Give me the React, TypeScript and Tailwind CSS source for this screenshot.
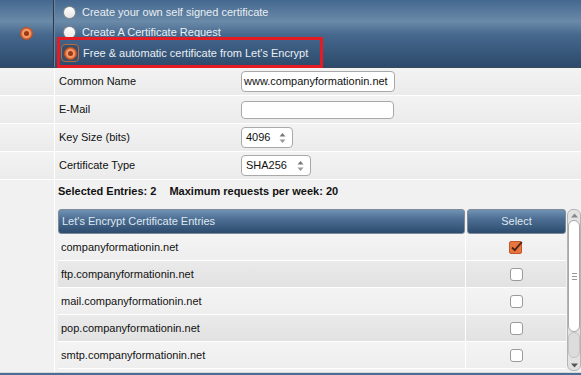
import React from 'react';

const entries = [
  { name: 'companyformationin.net', checked: true },
  { name: 'ftp.companyformationin.net', checked: false },
  { name: 'mail.companyformationin.net', checked: false },
  { name: 'pop.companyformationin.net', checked: false },
  { name: 'smtp.companyformationin.net', checked: false },
];

const OrangeRadio = () => (
  <span className="w-[13px] h-[13px] rounded-full bg-[#e36a34] border border-[#b94e22] flex items-center justify-center">
    <span className="w-[9px] h-[9px] rounded-full bg-[#f19a6c] flex items-center justify-center">
      <span className="w-[5px] h-[5px] rounded-full bg-[#9a3a14]" />
    </span>
  </span>
);

const WhiteRadio = () => (
  <span className="w-[13px] h-[13px] rounded-full bg-gradient-to-b from-white to-[#e6e6e6] border border-[#8a8a8a] shrink-0" />
);

const Spinner = ({ value, width }: { value: string; width: string }) => (
  <div
    className={`${width} h-[21px] bg-white border border-[#a9a9a9] rounded-[4px] flex items-center justify-between pl-[4px] pr-[6px]`}
  >
    <span>{value}</span>
    <svg width="7" height="12" viewBox="0 0 7 12">
      <path d="M0.5 4.5 L3.5 1 L6.5 4.5 Z" fill="#777" />
      <path d="M0.5 7.5 L3.5 11 L6.5 7.5 Z" fill="#999" />
    </svg>
  </div>
);

const Checkbox = ({ checked }: { checked: boolean }) =>
  checked ? (
    <svg width="14" height="14" viewBox="0 0 14 14">
      <rect x="0.5" y="1.5" width="12" height="12" rx="1.5" fill="#e8743e" stroke="#c2582a" />
      <path d="M3 7.5 L5.8 10.2 L12.8 2" fill="none" stroke="#4a2412" strokeWidth="1.8" />
    </svg>
  ) : (
    <span className="w-[13px] h-[13px] rounded-[3px] bg-white border border-[#9a9a9a]" />
  );

const FormRow = ({ label, children }: { label: string; children: React.ReactNode }) => (
  <div className="flex h-[28px] border-b border-white bg-gradient-to-b from-[#f3f3f3] to-[#ebebeb]">
    <div className="w-[55px] border-r border-white" />
    <div className="w-[186px] pl-[4px] flex items-center text-[#111]">{label}</div>
    <div className="flex items-center">{children}</div>
  </div>
);

export default function App() {
  return (
    <div className="relative w-[581px] h-[375px] overflow-hidden bg-[#efefef] text-[11px] text-[#111] font-['Liberation_Sans',Arial,sans-serif]">
      {/* header band with the three radio options */}
      <div className="flex h-[68px] border-b border-[#3a4a5a] bg-[linear-gradient(to_bottom,#44688f_0%,#6b8aa9_32%,#46688d_52%,#2c4a6b_100%)]">
        <div className="w-[54px] border-r border-[#2a3b4e] flex items-center justify-center">
          <OrangeRadio />
        </div>
        <div className="flex-1 border-l border-[#6d87a3] flex flex-col pt-[2px] pl-[8px] text-[#e9eef3]">
          <label className="h-[20px] flex items-center gap-[6px]">
            <WhiteRadio />
            <span>Create your own self signed certificate</span>
          </label>
          <label className="h-[20px] flex items-center gap-[6px]">
            <WhiteRadio />
            <span>Create A Certificate Request</span>
          </label>
          <label className="h-[22px] flex items-center gap-[4px] -ml-[2px]">
            <span className="w-[18px] h-[18px] rounded-[4px] border border-[#b86a48] bg-[#3a4f66] flex items-center justify-center">
              <OrangeRadio />
            </span>
            <span>Free &amp; automatic certificate from Let's Encrypt</span>
          </label>
        </div>
      </div>

      <FormRow label="Common Name">
        <div className="w-[154px] h-[21px] bg-white border border-[#a9a9a9] rounded-[4px] flex items-center pl-[2px]">
          www.companyformationin.net
        </div>
      </FormRow>
      <FormRow label="E-Mail">
        <div className="w-[153px] h-[18px] bg-white border border-[#a9a9a9] rounded-[4px]" />
      </FormRow>
      <FormRow label="Key Size (bits)">
        <Spinner value="4096" width="w-[52px]" />
      </FormRow>
      <FormRow label="Certificate Type">
        <Spinner value="SHA256" width="w-[70px]" />
      </FormRow>

      {/* entries section */}
      <div className="flex h-[192px] bg-[#f1f1f1]">
        <div className="w-[55px] border-r border-white" />
        <div className="flex-1 flex flex-col pl-[3px]">
          <div className="h-[29px] flex items-center font-bold gap-[13px] pb-[6px]">
            <span>Selected Entries: 2</span>
            <span>Maximum requests per week: 20</span>
          </div>
          <div className="flex">
            <div className="w-[508px] flex flex-col">
              <div className="flex gap-[2px] h-[25px]">
                <div className="w-[407px] rounded-[3px] border border-[#7d8a97] bg-[linear-gradient(to_bottom,#7092b4_0%,#4d6e93_40%,#2c4b6e_100%)] text-[#dfe7ef] flex items-center pl-[3px]">
                  Let's Encrypt Certificate Entries
                </div>
                <div className="flex-1 rounded-[3px] border border-[#7d8a97] bg-[linear-gradient(to_bottom,#7092b4_0%,#4d6e93_40%,#2c4b6e_100%)] text-[#dfe7ef] flex items-center justify-center">
                  Select
                </div>
              </div>
              {entries.map((e, i) => (
                <div
                  key={e.name}
                  className={`flex h-[27px] border-b border-white ${
                    i % 2 === 0
                      ? 'bg-gradient-to-b from-[#f4f4f4] to-[#eeeeee]'
                      : 'bg-gradient-to-b from-[#eaeaea] to-[#e2e2e2]'
                  }`}
                >
                  <div className="w-[408px] border-r border-white flex items-center pl-[3px]">
                    {e.name}
                  </div>
                  <div className="flex-1 flex items-center justify-center">
                    <Checkbox checked={e.checked} />
                  </div>
                </div>
              ))}
            </div>
            {/* scrollbar */}
            <div className="w-[14px] h-[162px] ml-[1px] rounded-[6px] border border-[#b5b5b5] bg-[#e2e2e2] flex flex-col items-center">
              <div className="h-[10px] flex items-center">
                <svg width="7" height="5" viewBox="0 0 7 5">
                  <path d="M0 4.5 L3.5 0.5 L7 4.5 Z" fill="#888" />
                </svg>
              </div>
              <div className="w-[12px] h-[112px] rounded-[6px] border border-[#a8a8a8] bg-white flex items-center justify-center">
                <div className="flex flex-col gap-[2px]">
                  <span className="w-[5px] h-px bg-[#999]" />
                  <span className="w-[5px] h-px bg-[#999]" />
                  <span className="w-[5px] h-px bg-[#999]" />
                </div>
              </div>
              <div className="flex-1 w-[12px] rounded-[6px] border border-[#c4c4c4] bg-[#dcdcdc] mb-[2px]" />
              <div className="h-[10px] flex items-center">
                <svg width="7" height="5" viewBox="0 0 7 5">
                  <path d="M0 0.5 L3.5 4.5 L7 0.5 Z" fill="#555" />
                </svg>
              </div>
            </div>
          </div>
        </div>
      </div>
      <div className="h-[4px] border-t border-[#d8d8d8] bg-[#4a6d93]" />

      {/* red annotation box */}
      <div className="absolute left-[57px] top-[37px] w-[266px] h-[31px] border-[3px] border-[#e41b23]" />
    </div>
  );
}
